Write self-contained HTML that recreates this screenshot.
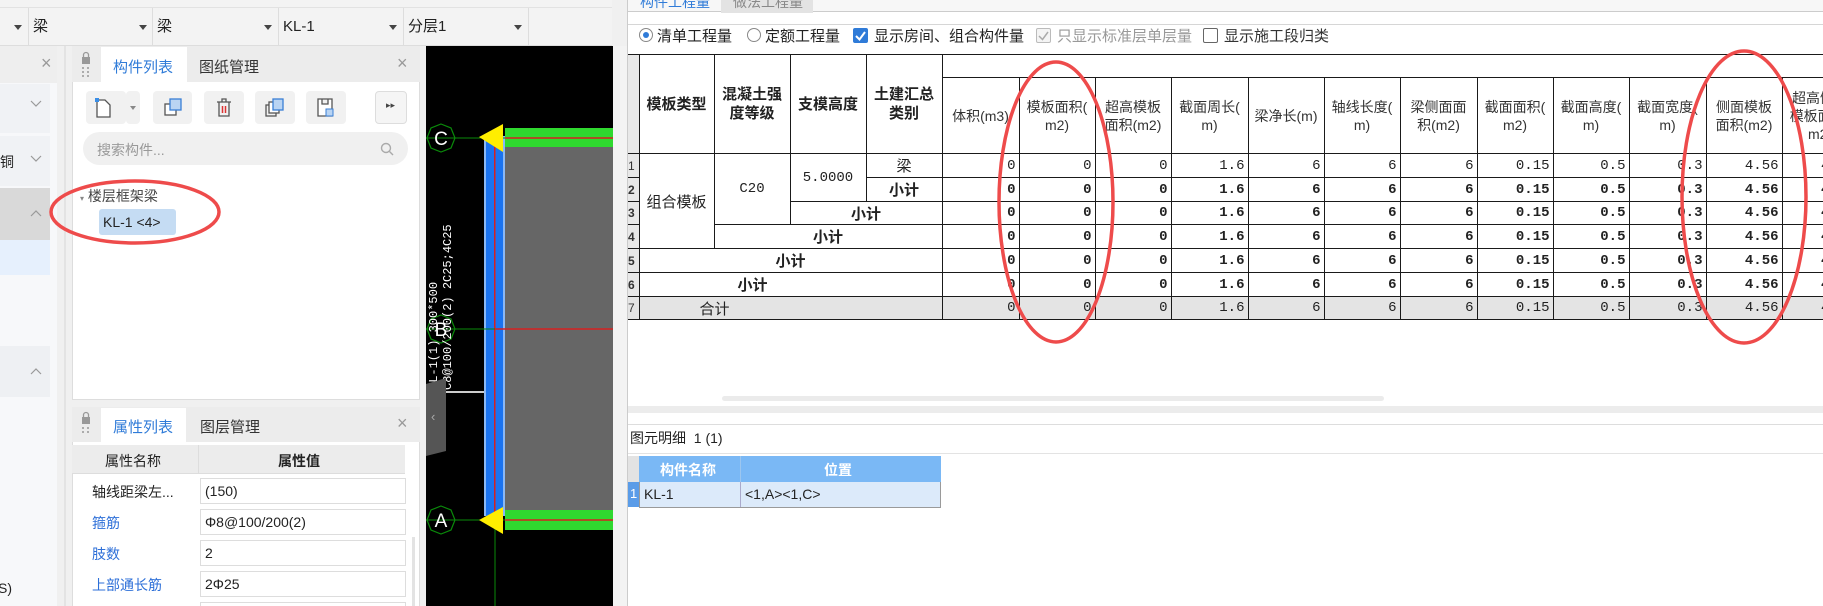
<!DOCTYPE html>
<html style="width:1823px;height:606px;overflow:hidden"><head><meta charset="utf-8">
<style>
*{box-sizing:border-box;margin:0;padding:0}
html,body{overflow:hidden}
body{width:1823px;height:606px;overflow:hidden;position:relative;background:#f0f0f0;font-family:"Liberation Sans","Noto Sans CJK SC",sans-serif;font-size:13px;color:#222}
.a{position:absolute}
.dd{position:absolute;top:8px;height:38px;border-right:1px solid #ddd;font-size:15px;line-height:38px;padding-left:4px}
.arr{position:absolute;top:25px;width:0;height:0;border-left:4px solid transparent;border-right:4px solid transparent;border-top:5px solid #444}
.btn{position:absolute;top:91px;height:33px;background:#f1f1f1;border-radius:4px}
table.q{position:absolute;left:628px;top:54px;border-collapse:collapse;table-layout:fixed;font-size:13px}
table.q td{border:1px solid #1a1a1a;overflow:hidden;white-space:nowrap;padding:0}
table.q td.n{text-align:right;padding-right:3px;font-family:"Liberation Mono",monospace;font-size:14px}
table.q tr.b td{font-weight:bold}
table.q td.i{background:#e8e8e8;border-left:none;font-size:12px;color:#333;text-align:left;padding-left:0}
table.q td.h{font-weight:bold;text-align:center;font-size:15px;line-height:19px;white-space:normal}
table.q td.hh{text-align:center;font-size:14px;line-height:18px;white-space:normal;color:#333}
table.q td.c{text-align:center}
table.q tr.g td{background:#e4e4e4}
.prow{position:absolute;left:72px;width:334px;height:26px}
.pl{position:absolute;left:20px;top:4px;font-size:14px}
.pv{position:absolute;left:128px;top:0;width:206px;height:26px;border:1px solid #ddd;background:#fff;padding-left:4px;line-height:24px;font-size:14px}
</style></head><body>

<!-- top toolbar -->
<div class="a" style="left:0;top:0;width:612px;height:46px;background:#f3f3f3;border-bottom:1px solid #ddd"></div>
<div class="a" style="left:0;top:7px;width:612px;height:1px;background:#e2e2e2"></div>
<div class="dd" style="left:0;width:29px"></div><div class="arr" style="left:14px"></div>
<div class="dd" style="left:29px;width:124px">梁</div><div class="arr" style="left:139px"></div>
<div class="dd" style="left:153px;width:126px">梁</div><div class="arr" style="left:264px"></div>
<div class="dd" style="left:279px;width:125px">KL-1</div><div class="arr" style="left:389px"></div>
<div class="dd" style="left:404px;width:125px">分层1</div><div class="arr" style="left:514px"></div>

<!-- left panel -->
<div class="a" style="left:0;top:46px;width:65px;height:560px;background:#f7f8fa;border-right:1px solid #ddd"></div>
<div class="a" style="left:0;top:46px;width:65px;height:37px;background:#eeeeee"></div>
<div class="a" style="left:41px;top:53px;font-size:18px;color:#999">×</div>
<div class="a" style="left:0;top:84px;width:50px;height:49px;background:#f0f2f5"></div>
<div class="a" style="left:0;top:136px;width:50px;height:50px;background:#f0f2f5"></div>
<div class="a" style="left:0;top:188px;width:50px;height:52px;background:#d9d9d9"></div>
<div class="a" style="left:0;top:240px;width:50px;height:35px;background:#e6f0fd"></div>
<div class="a" style="left:0;top:346px;width:50px;height:51px;background:#eef0f3"></div>
<div class="a" style="left:0;top:152px;font-size:14px">铜</div>
<svg class="a" style="left:30px;top:100px" width="12" height="8"><path d="M1 1 L6 6 L11 1" fill="none" stroke="#999" stroke-width="1.2"/></svg>
<svg class="a" style="left:30px;top:155px" width="12" height="8"><path d="M1 1 L6 6 L11 1" fill="none" stroke="#999" stroke-width="1.2"/></svg>
<svg class="a" style="left:30px;top:209px" width="12" height="8"><path d="M1 7 L6 2 L11 7" fill="none" stroke="#999" stroke-width="1.2"/></svg>
<svg class="a" style="left:30px;top:367px" width="12" height="8"><path d="M1 7 L6 2 L11 7" fill="none" stroke="#999" stroke-width="1.2"/></svg>
<div class="a" style="left:-2px;top:580px;font-size:14px">S)</div>
<div class="a" style="left:57px;top:46px;width:15px;height:560px;background:#f0f0f0"></div>
<div class="a" style="left:64px;top:46px;width:2px;height:560px;background:#e3e3e3"></div>

<!-- middle top panel -->
<div class="a" style="left:72px;top:46px;width:348px;height:354px;background:#fff;border:1px solid #ddd"></div>
<div class="a" style="left:72px;top:46px;width:348px;height:36px;background:#ececec"></div>
<div class="a" style="left:101px;top:47px;width:86px;height:35px;background:#fff"></div>
<svg class="a" style="left:80px;top:51px" width="12" height="30"><rect x="2" y="6" width="8" height="7" fill="#999"/><path d="M3.5 6 V4 a2.5 2.5 0 0 1 5 0 V6" fill="none" stroke="#999" stroke-width="1.3"/><g fill="#999"><circle cx="3" cy="17" r="1"/><circle cx="8" cy="17" r="1"/><circle cx="3" cy="21" r="1"/><circle cx="8" cy="21" r="1"/><circle cx="3" cy="25" r="1"/><circle cx="8" cy="25" r="1"/></g></svg>
<div class="a" style="left:113px;top:56px;font-size:15px;color:#2f7bd8">构件列表</div>
<div class="a" style="left:199px;top:56px;font-size:15px;color:#333">图纸管理</div>
<div class="a" style="left:397px;top:53px;font-size:18px;color:#999">×</div>
<div class="btn" style="left:86px;width:40px"></div><div class="btn" style="left:126px;width:14px"></div>
<svg class="a" style="left:93px;top:96px" width="20" height="24"><path d="M4 4 H12 L17 9 V21 H4 Z" fill="#fff" stroke="#555" stroke-width="1.3"/><rect x="2" y="2" width="4" height="4" fill="#3a8ee6"/></svg>
<div class="arr" style="left:130px;top:106px;border-top-color:#888;border-left-width:3px;border-right-width:3px;border-top-width:4px"></div>
<div class="btn" style="left:153px;width:39px"></div>
<svg class="a" style="left:162px;top:97px" width="22" height="22"><rect x="3" y="7" width="11" height="11" fill="#fff" stroke="#555" stroke-width="1.3"/><rect x="8" y="2" width="11" height="11" fill="#b9d4f3" stroke="#3a7fd5" stroke-width="1.3"/></svg>
<div class="btn" style="left:204px;width:40px"></div>
<svg class="a" style="left:214px;top:97px" width="20" height="22"><path d="M3 5 H17 M8 5 V2 H12 V5 M5 5 V19 H15 V5" fill="none" stroke="#555" stroke-width="1.3"/><path d="M8.5 9 V16 M11.5 9 V16" stroke="#d33" stroke-width="1.5"/></svg>
<div class="btn" style="left:255px;width:40px"></div>
<svg class="a" style="left:264px;top:97px" width="22" height="22"><rect x="2" y="8" width="10" height="11" fill="none" stroke="#555" stroke-width="1.3"/><rect x="5" y="5" width="10" height="11" fill="#fff" stroke="#555" stroke-width="1.3"/><rect x="9" y="2" width="10" height="11" fill="#b9d4f3" stroke="#3a7fd5" stroke-width="1.3"/></svg>
<div class="btn" style="left:306px;width:40px"></div>
<svg class="a" style="left:315px;top:96px" width="22" height="24"><path d="M3 3 H17 V20 H3 Z M7 3 V8 H13 V3" fill="#fff" stroke="#555" stroke-width="1.3"/><rect x="11" y="13" width="7" height="7" fill="#b9d4f3" stroke="#3a7fd5" stroke-width="1"/></svg>
<div class="btn" style="left:375px;width:32px;background:#f5f5f5;border:1px solid #ddd"></div>
<div class="a" style="left:386px;top:100px;font-size:9px;color:#444">▸▸</div>
<div class="a" style="left:83px;top:132px;width:325px;height:33px;background:#f0f0f0;border-radius:17px"></div>
<div class="a" style="left:97px;top:140px;font-size:14px;color:#999">搜索构件...</div>
<svg class="a" style="left:380px;top:142px" width="14" height="14"><circle cx="6" cy="6" r="4.5" fill="none" stroke="#aaa" stroke-width="1.4"/><path d="M9.5 9.5 L13 13" stroke="#aaa" stroke-width="1.4"/></svg>
<div class="a" style="left:80px;top:186px;font-size:14px;color:#444"><span style="font-size:8px;color:#888">▾</span> 楼层框架梁</div>
<div class="a" style="left:99px;top:209px;width:77px;height:26px;background:#c5dcf3;border-radius:3px;font-size:14px;line-height:26px;padding-left:4px">KL-1 &lt;4&gt;</div>

<!-- property panel -->
<div class="a" style="left:72px;top:407px;width:348px;height:199px;background:#fff;border:1px solid #ddd;border-bottom:none"></div>
<div class="a" style="left:72px;top:407px;width:348px;height:35px;background:#ececec"></div>
<div class="a" style="left:101px;top:408px;width:85px;height:34px;background:#fff"></div>
<svg class="a" style="left:80px;top:411px" width="12" height="30"><rect x="2" y="6" width="8" height="7" fill="#999"/><path d="M3.5 6 V4 a2.5 2.5 0 0 1 5 0 V6" fill="none" stroke="#999" stroke-width="1.3"/><g fill="#999"><circle cx="3" cy="17" r="1"/><circle cx="8" cy="17" r="1"/><circle cx="3" cy="21" r="1"/><circle cx="8" cy="21" r="1"/></g></svg>
<div class="a" style="left:113px;top:416px;font-size:15px;color:#2f7bd8">属性列表</div>
<div class="a" style="left:200px;top:416px;font-size:15px;color:#333">图层管理</div>
<div class="a" style="left:397px;top:413px;font-size:18px;color:#999">×</div>
<div class="a" style="left:72px;top:445px;width:333px;height:29px;background:#ececec;border-bottom:1px solid #ddd"></div>
<div class="a" style="left:198px;top:445px;width:1px;height:29px;background:#ddd"></div>
<div class="a" style="left:105px;top:451px;font-size:14px">属性名称</div>
<div class="a" style="left:278px;top:451px;font-size:14px;font-weight:bold">属性值</div>
<div class="prow" style="top:478px"><div class="pl">轴线距梁左...</div><div class="pv">(150)</div></div>
<div class="prow" style="top:509px"><div class="pl" style="color:#2d6fd8">箍筋</div><div class="pv">Φ8@100/200(2)</div></div>
<div class="prow" style="top:540px"><div class="pl" style="color:#2d6fd8">肢数</div><div class="pv">2</div></div>
<div class="prow" style="top:571px"><div class="pl" style="color:#2d6fd8">上部通长筋</div><div class="pv">2Φ25</div></div>
<div class="prow" style="top:602px;height:4px;overflow:hidden"><div class="pv"></div></div>
<div class="a" style="left:412px;top:537px;width:3px;height:69px;background:#e3e3e3"></div>

<!-- CAD -->
<svg class="a" style="left:420px;top:46px" width="207" height="560">
<rect x="6" y="0" width="187" height="560" fill="#000"/>
<rect x="193" y="0" width="14" height="560" fill="#f3f3f3"/>
<rect x="85" y="101" width="108" height="363" fill="#666"/>
<rect x="64" y="90" width="21" height="380" fill="#1a73f0"/>
<rect x="64" y="90" width="2" height="380" fill="#8ab8f5"/>
<rect x="83" y="90" width="2" height="380" fill="#8ab8f5"/>
<rect x="74" y="90" width="1.5" height="380" fill="#d62020"/>
<rect x="85" y="82" width="108" height="19" fill="#2fd82f"/>
<rect x="85" y="464" width="108" height="20" fill="#2fd82f"/>
<line x1="6" y1="92" x2="193" y2="92" stroke="#0a8a0a" stroke-width="1"/>
<line x1="85" y1="92" x2="193" y2="92" stroke="#d62020" stroke-width="1.5"/>
<line x1="6" y1="283" x2="75" y2="283" stroke="#0a8a0a" stroke-width="1"/>
<line x1="75" y1="283" x2="193" y2="283" stroke="#d62020" stroke-width="1.5"/>
<line x1="6" y1="474" x2="85" y2="474" stroke="#0a8a0a" stroke-width="1"/>
<line x1="85" y1="474" x2="193" y2="474" stroke="#d62020" stroke-width="1.5"/>
<line x1="75" y1="474" x2="75" y2="560" stroke="#0a8a0a" stroke-width="1"/>
<polygon points="59,91 83,78 83,106" fill="#ffee00"/>
<polygon points="59,474 83,461 83,488" fill="#ffee00"/>
<g fill="none" stroke="#0a8a0a" stroke-width="1.2">
<polygon points="21,78 31,82 35,92 31,102 21,106 11,102 7,92 11,82"/>
<polygon points="21,269 31,273 35,283 31,293 21,297 11,293 7,283 11,273"/>
<polygon points="21,460 31,464 35,474 31,484 21,488 11,484 7,474 11,464"/>
</g>
<text x="21" y="99" fill="#fff" font-size="19" text-anchor="middle" font-family="Liberation Sans">C</text>
<text x="21" y="290" fill="#fff" font-size="19" text-anchor="middle" font-family="Liberation Sans">B</text>
<text x="21" y="481" fill="#fff" font-size="19" text-anchor="middle" font-family="Liberation Sans">A</text>
<text transform="translate(17,344) rotate(-90)" fill="#fff" font-size="12" font-family="Liberation Mono">KL-1(1) 300*500</text>
<text transform="translate(31,344) rotate(-90)" fill="#fff" font-size="12" font-family="Liberation Mono">C8@100/200(2) 2C25;4C25</text>
<rect x="26" y="345" width="38" height="2" fill="#ccc"/>
<polygon points="6,338 26,332 26,405 6,410" fill="#555"/>
<text x="11" y="375" fill="#aaa" font-size="13">‹</text>
</svg>

<!-- right panel -->
<div class="a" style="left:627px;top:0;width:1196px;height:606px;background:#fff;border-left:1px solid #ccc"></div>
<div class="a" style="left:628px;top:0;width:1195px;height:12px;background:#f7f7f7;border-bottom:1px solid #ccc"></div>
<div class="a" style="left:640px;top:-8px;font-size:14px;color:#2f7bd8">构件工程量</div>
<div class="a" style="left:721px;top:0;width:92px;height:13px;background:#e3e3e3;overflow:hidden"><div style="position:absolute;left:12px;top:-8px;font-size:14px;color:#888">做法工程量</div></div>
<div class="a" style="left:628px;top:24px;width:1195px;height:1px;background:#d6d6d6"></div>
<!-- options -->
<div class="a" style="left:639px;top:28px;width:14px;height:14px;border:1px solid #888;border-radius:50%;background:#fff"></div>
<div class="a" style="left:643px;top:32px;width:6px;height:6px;border-radius:50%;background:#2f7bd8"></div>
<div class="a" style="left:657px;top:25px;font-size:15px">清单工程量</div>
<div class="a" style="left:747px;top:28px;width:14px;height:14px;border:1px solid #888;border-radius:50%;background:#fff"></div>
<div class="a" style="left:765px;top:25px;font-size:15px">定额工程量</div>
<div class="a" style="left:853px;top:28px;width:15px;height:15px;border-radius:2px;background:#2f7bd8"></div>
<svg class="a" style="left:853px;top:28px" width="15" height="15"><path d="M3 8 L6.5 11.5 L12 4" fill="none" stroke="#fff" stroke-width="2"/></svg>
<div class="a" style="left:874px;top:25px;font-size:15px">显示房间、组合构件量</div>
<div class="a" style="left:1036px;top:28px;width:15px;height:15px;border:1px solid #bbb;border-radius:2px;background:#f4f4f4"></div>
<svg class="a" style="left:1036px;top:28px" width="15" height="15"><path d="M3 8 L6.5 11.5 L12 4" fill="none" stroke="#aaa" stroke-width="1.5"/></svg>
<div class="a" style="left:1057px;top:25px;font-size:15px;color:#999">只显示标准层单层量</div>
<div class="a" style="left:1203px;top:28px;width:15px;height:15px;border:1px solid #666;border-radius:2px;background:#fff"></div>
<div class="a" style="left:1224px;top:25px;font-size:15px;color:#333">显示施工段归类</div>

<!-- quantity table -->
<div class="a" style="left:628px;top:54px;width:1195px;height:270px;overflow:hidden">
<table class="q" style="left:0;top:0;width:1230px">
<colgroup><col style="width:11px"><col style="width:75px"><col style="width:76px"><col style="width:76px"><col style="width:76px">
<col style="width:77px"><col style="width:76px"><col style="width:76px"><col style="width:77px"><col style="width:76px"><col style="width:76px"><col style="width:77px"><col style="width:76px"><col style="width:76px"><col style="width:77px"><col style="width:76px"><col style="width:76px"></colgroup>
<tr style="height:23px"><td class="i" rowspan="2"></td><td class="h" rowspan="2">模板类型</td><td class="h" rowspan="2">混凝土强<br>度等级</td><td class="h" rowspan="2">支模高度</td><td class="h" rowspan="2">土建汇总<br>类别</td><td colspan="12" style="border-bottom:1px solid #1a1a1a"></td></tr>
<tr style="height:76px"><td class="hh">体积(m3)</td><td class="hh">模板面积(<br>m2)</td><td class="hh">超高模板<br>面积(m2)</td><td class="hh">截面周长(<br>m)</td><td class="hh">梁净长(m)</td><td class="hh">轴线长度(<br>m)</td><td class="hh">梁侧面面<br>积(m2)</td><td class="hh">截面面积(<br>m2)</td><td class="hh">截面高度(<br>m)</td><td class="hh">截面宽度(<br>m)</td><td class="hh">侧面模板<br>面积(m2)</td><td class="hh">超高侧面<br>模板面积(<br>m2)</td></tr>
<tr style="height:24px"><td class="i">1</td><td class="c" rowspan="4" style="font-size:15px">组合模板</td><td class="c" rowspan="3" style="font-family:'Liberation Mono',monospace;font-size:14px">C20</td><td class="c" rowspan="2" style="font-family:'Liberation Mono',monospace;font-size:14px">5.0000</td><td class="c" style="font-size:15px">梁</td><td class="n">0</td><td class="n">0</td><td class="n">0</td><td class="n">1.6</td><td class="n">6</td><td class="n">6</td><td class="n">6</td><td class="n">0.15</td><td class="n">0.5</td><td class="n">0.3</td><td class="n">4.56</td><td class="n">4.56</td></tr>
<tr class="b" style="height:24px"><td class="i">2</td><td class="c" style="font-size:15px">小计</td><td class="n">0</td><td class="n">0</td><td class="n">0</td><td class="n">1.6</td><td class="n">6</td><td class="n">6</td><td class="n">6</td><td class="n">0.15</td><td class="n">0.5</td><td class="n">0.3</td><td class="n">4.56</td><td class="n">4.56</td></tr>
<tr class="b" style="height:23px"><td class="i">3</td><td class="c" colspan="2" style="font-size:15px">小计</td><td class="n">0</td><td class="n">0</td><td class="n">0</td><td class="n">1.6</td><td class="n">6</td><td class="n">6</td><td class="n">6</td><td class="n">0.15</td><td class="n">0.5</td><td class="n">0.3</td><td class="n">4.56</td><td class="n">4.56</td></tr>
<tr class="b" style="height:24px"><td class="i">4</td><td class="c" colspan="3" style="font-size:15px">小计</td><td class="n">0</td><td class="n">0</td><td class="n">0</td><td class="n">1.6</td><td class="n">6</td><td class="n">6</td><td class="n">6</td><td class="n">0.15</td><td class="n">0.5</td><td class="n">0.3</td><td class="n">4.56</td><td class="n">4.56</td></tr>
<tr class="b" style="height:24px"><td class="i">5</td><td class="c" colspan="4" style="font-size:15px">小计</td><td class="n">0</td><td class="n">0</td><td class="n">0</td><td class="n">1.6</td><td class="n">6</td><td class="n">6</td><td class="n">6</td><td class="n">0.15</td><td class="n">0.5</td><td class="n">0.3</td><td class="n">4.56</td><td class="n">4.56</td></tr>
<tr class="b" style="height:24px"><td class="i">6</td><td class="c" colspan="4" style="font-size:15px;padding-right:76px">小计</td><td class="n">0</td><td class="n">0</td><td class="n">0</td><td class="n">1.6</td><td class="n">6</td><td class="n">6</td><td class="n">6</td><td class="n">0.15</td><td class="n">0.5</td><td class="n">0.3</td><td class="n">4.56</td><td class="n">4.56</td></tr>
<tr class="g" style="height:23px"><td class="i">7</td><td class="c" colspan="4" style="font-size:15px;padding-right:152px">合计</td><td class="n">0</td><td class="n">0</td><td class="n">0</td><td class="n">1.6</td><td class="n">6</td><td class="n">6</td><td class="n">6</td><td class="n">0.15</td><td class="n">0.5</td><td class="n">0.3</td><td class="n">4.56</td><td class="n">4.56</td></tr>
</table></div>

<div class="a" style="left:722px;top:396px;width:662px;height:5px;background:#ebebeb;border-radius:3px"></div>
<div class="a" style="left:628px;top:406px;width:1195px;height:7px;background:#ececec"></div>
<div class="a" style="left:628px;top:424px;width:1195px;height:1px;background:#ddd"></div>
<div class="a" style="left:630px;top:428px;font-size:14px">图元明细&nbsp; 1 (1)</div>
<div class="a" style="left:628px;top:453px;width:1195px;height:1px;background:#e3e3e3"></div>
<div class="a" style="left:628px;top:456px;width:11px;height:51px;background:#e3e3e3"></div>
<div class="a" style="left:628px;top:482px;width:11px;height:25px;background:#5a9ce8"></div>
<div class="a" style="left:630px;top:486px;font-size:13px;color:#fff">1</div>
<div class="a" style="left:639px;top:456px;width:302px;height:26px;background:#7ab8f5"></div>
<div class="a" style="left:740px;top:456px;width:1px;height:51px;background:#9cc6ef"></div>
<div class="a" style="left:660px;top:460px;font-size:14px;color:#fff;font-weight:bold">构件名称</div>
<div class="a" style="left:824px;top:460px;font-size:14px;color:#fff;font-weight:bold">位置</div>
<div class="a" style="left:639px;top:482px;width:302px;height:26px;background:#dceafa;border:1px solid #9a9a9a;border-top:none"></div>
<div class="a" style="left:740px;top:482px;width:1px;height:25px;background:#aac"></div>
<div class="a" style="left:644px;top:486px;font-size:14px">KL-1</div>
<div class="a" style="left:745px;top:486px;font-size:14px">&lt;1,A&gt;&lt;1,C&gt;</div>

<!-- red ellipses -->
<svg class="a" style="left:0;top:0" width="1823" height="606">
<g fill="none" stroke="#ee4b4b" stroke-width="3.5">
<ellipse cx="135" cy="212" rx="84" ry="31"/>
<ellipse cx="1056" cy="202" rx="57" ry="140"/>
<ellipse cx="1744" cy="197" rx="62" ry="146"/>
</g></svg>
</body></html>
